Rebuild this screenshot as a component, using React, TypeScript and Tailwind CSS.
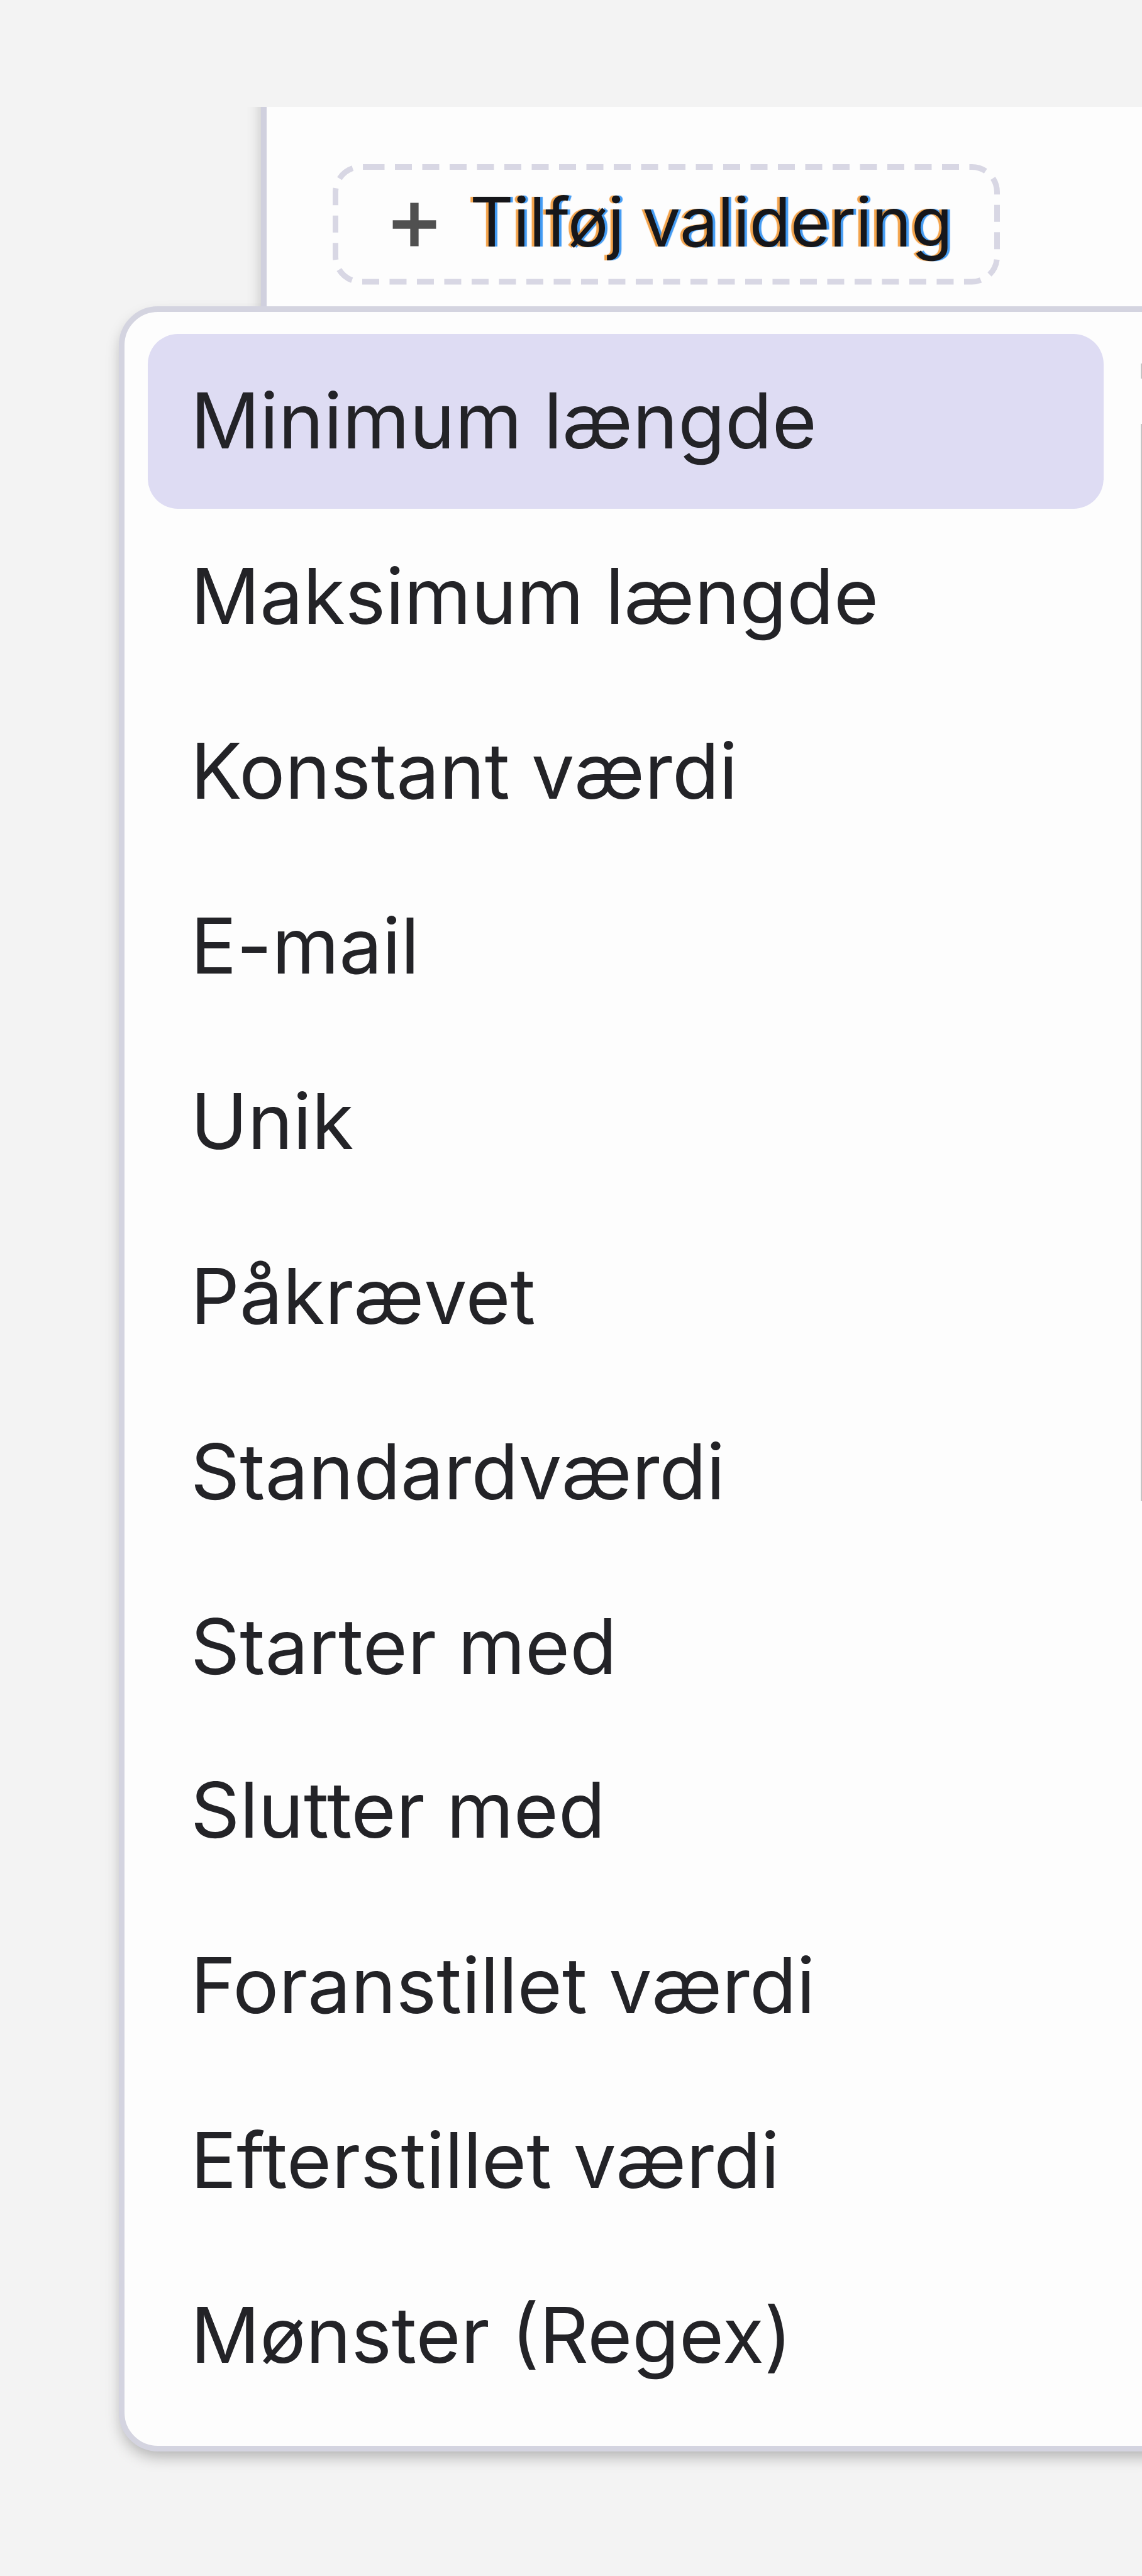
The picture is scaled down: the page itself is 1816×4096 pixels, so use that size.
import { Plus } from 'lucide-react';

const validations = [
  'Minimum længde',
  'Maksimum længde',
  'Konstant værdi',
  'E-mail',
  'Unik',
  'Påkrævet',
  'Standardværdi',
  'Starter med',
  'Slutter med',
  'Foranstillet værdi',
  'Efterstillet værdi',
  'Mønster (Regex)',
];

function AddValidationButton() {
  return (
    <button className="relative flex h-[194px] w-[1061px] items-center gap-[29px] pl-[71px]">
      {/* dashed outline, the dashes are longer than border-dashed gives */}
      <svg className="absolute inset-0" width="1061" height="194" fill="none">
        <path
          d="M55.5 5.5H1016.5A40 40 0 0 1 1056.5 45.5V148A40 40 0 0 1 1016.5 188H44.5A40 40 0 0 1 4.5 148V45.5A40 40 0 0 1 44.5 5.5Z"
          stroke="#d8d7e4"
          strokeWidth="9"
          strokeDasharray="27 16.5"
        />
      </svg>
      <Plus className="size-[118px] text-[#505050]" strokeWidth={2.7} strokeLinecap="butt" />
      <span className="pb-2 text-[108px] leading-none tracking-[-0.8px] whitespace-nowrap text-[#16161a] [text-shadow:-4px_0_1px_rgba(240,140,30,0.8),4px_0_1px_rgba(20,130,240,0.8)]">
        Tilføj validering
      </span>
    </button>
  );
}

function ValidationMenu() {
  return (
    <ul className="ml-[189px] flex h-[3411px] w-[1700px] flex-col rounded-[62px] border-9 border-[#d4d4e0] bg-[#fdfdfd] pt-[35px] pl-[37px] shadow-[0_12px_24px_-4px_rgba(0,0,0,0.28)]">
      {validations.map((name, i) => (
        <li
          key={name}
          className={`flex h-[278.4px] w-[1520px] shrink-0 items-center rounded-[48px] pb-[2px] pl-[68px] text-[122px] leading-none whitespace-nowrap text-[#232327] ${i === 0 ? 'bg-[#dedcf3]' : ''} ${i === 8 ? '-mt-[18px]' : ''}`}
        >
          {name}
        </li>
      ))}
    </ul>
  );
}

export default function App() {
  return (
    <div className="relative h-[4096px] w-[1816px] overflow-hidden bg-[#f3f3f3] pt-[170px] font-['Inter',sans-serif]">
      <div className="flex h-[317px] items-center overflow-hidden pl-[415px]">
        <div className="h-[600px] w-[1500px] shrink-0 border-l-9 border-[#d0d0de] bg-[#fdfdfd] pt-[231px] pl-[105px] shadow-[0_12px_24px_-4px_rgba(0,0,0,0.28)]">
          <AddValidationButton />
        </div>
      </div>
      <ValidationMenu />
      {/* scrollbar at the right edge */}
      <div className="absolute inset-y-0 right-0 flex w-[2px] flex-col gap-[72px] pt-[578px]">
        <div className="h-6 bg-[#c4c4c4]" />
        <div className="h-[1713px] bg-[#c4c4c4]" />
      </div>
    </div>
  );
}
